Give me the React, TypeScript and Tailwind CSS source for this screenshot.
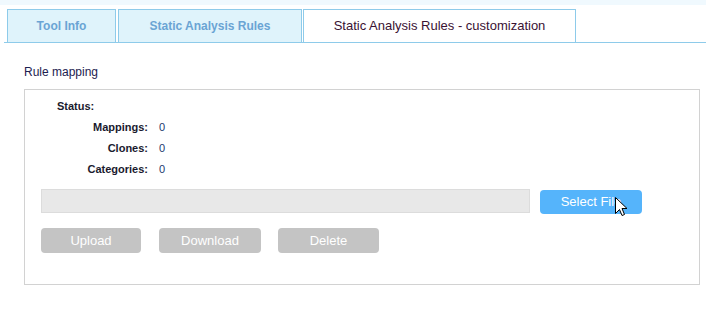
export default function App() {
  const stats = [
    { label: 'Mappings:', value: '0' },
    { label: 'Clones:', value: '0' },
    { label: 'Categories:', value: '0' },
  ]

  return (
    <div className="relative w-[706px] h-[311px] bg-white font-['Liberation_Sans',Arial,sans-serif] overflow-hidden">
      {/* top strip */}
      <div className="h-[5px] bg-[#f0f9fe]" />

      {/* tabs */}
      <div className="mt-[4px] ml-[4px] flex items-end border-b border-[#8ecbea] pl-[3px]">
        <div className="w-[109px] h-[33px] flex items-center justify-center border border-b-0 border-[#8ecbea] bg-[#dff3fb] text-[12px] font-bold text-[#6aa4d4]">
          Tool Info
        </div>
        <div className="ml-[2px] w-[184px] h-[33px] flex items-center justify-center border border-b-0 border-[#8ecbea] bg-[#dff3fb] text-[12px] font-bold text-[#6aa4d4]">
          Static Analysis Rules
        </div>
        <div className="ml-[1px] w-[273px] h-[33px] flex items-center justify-center border border-b-0 border-[#8ecbea] bg-white text-[13px] text-[#3a1233]">
          Static Analysis Rules - customization
        </div>
      </div>

      {/* section */}
      <div className="pl-[24px] pt-[22px] text-[12px] leading-[14px] text-[#1c2150]">Rule mapping</div>

      <div className="ml-[24px] mt-[10px] w-[676px] h-[196px] border border-[#d2d2d2]">
        <div className="pl-[32px] pt-[10px] text-[11px] leading-[13px] font-bold text-[#1a1a2e]">Status:</div>

        <div className="mt-[8px] grid grid-cols-[123px_auto] gap-x-[11px] gap-y-[8px] text-[11px] leading-[13px]">
          {stats.map((s) => (
            <div key={s.label} className="contents">
              <div className="text-right font-bold text-[#1a1a2e]">{s.label}</div>
              <div className="text-[#1c3a6e]">{s.value}</div>
            </div>
          ))}
        </div>

        <div className="mt-[13px] pl-[16px] flex items-start gap-[10px]">
          <div className="w-[489px] h-[24px] bg-[#e8e8e8] border border-[#dcdcdc]" />
          <button className="mt-[1px] w-[102px] h-[24px] rounded-[4px] bg-[#55b4fb] text-white text-[13px]">
            Select File
          </button>
        </div>

        <div className="mt-[14px] pl-[16px] flex">
          <button className="w-[100px] h-[25px] rounded-[4px] bg-[#c4c4c4] text-white text-[13px]">Upload</button>
          <button className="ml-[18px] w-[102px] h-[25px] rounded-[4px] bg-[#c4c4c4] text-white text-[13px]">Download</button>
          <button className="ml-[17px] w-[101px] h-[25px] rounded-[4px] bg-[#c4c4c4] text-white text-[13px]">Delete</button>
        </div>
      </div>

      {/* mouse cursor */}
      <svg className="absolute left-[615px] top-[197px]" width="13" height="21" viewBox="0 0 13 21">
        <path d="M0.5 0.5 L0.5 16.5 L4.5 12.5 L7 18.5 L9.5 17.5 L7 11.5 L12 11.5 Z" fill="#fff" stroke="#000" strokeWidth="1" />
      </svg>
    </div>
  )
}
